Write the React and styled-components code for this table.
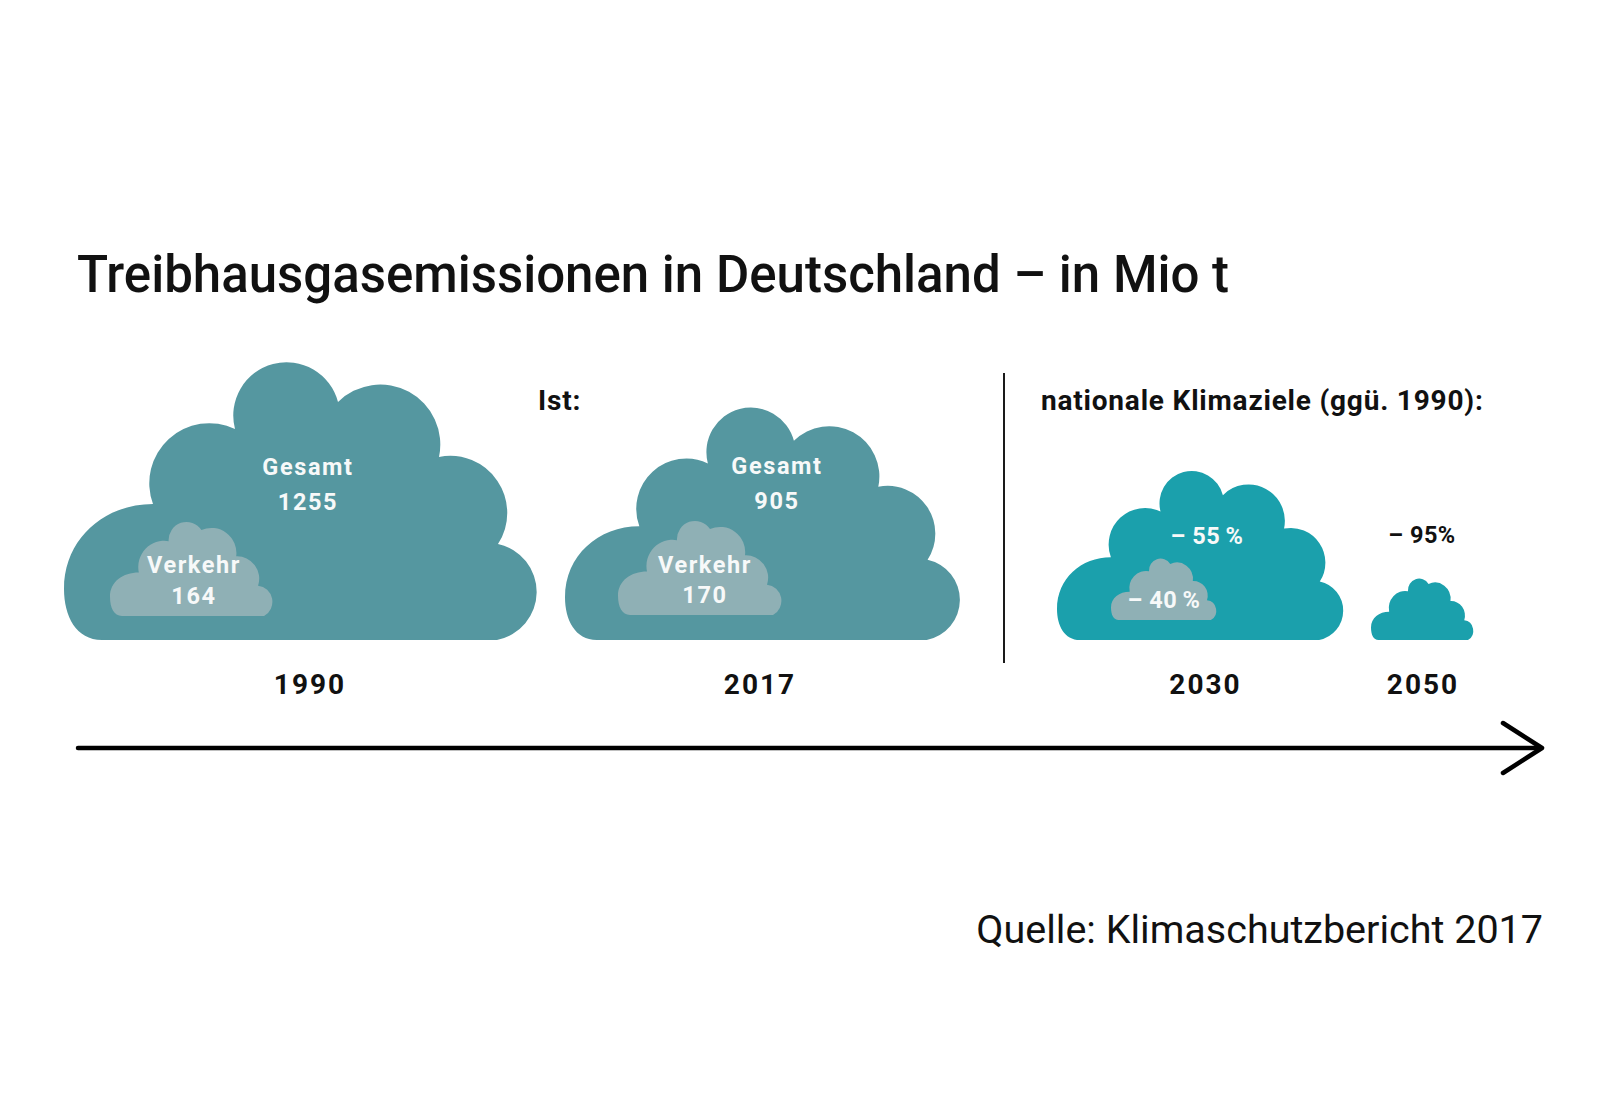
import React from 'react';
import styled, { createGlobalStyle } from 'styled-components';

// Wolkenformen (Pfad im eigenen Koordinatensystem, wird per viewBox skaliert)
const SHAPES = {
  big: {
    w: 474,
    h: 276,
    d: 'M 38 276 C 12 276 0 252 0 225 C 0 175 40 140 89 140 A 60 60 0 0 1 171 65 A 53 53 0 0 1 274 38 A 60 60 0 0 1 375 93 A 57 57 0 0 1 434 180 A 49 49 0 0 1 433 276 Z',
  },
  small: {
    w: 163,
    h: 94,
    d: 'M 12 94 C 4 94 0 86 0 75 C 0 60 13 51 29 51 A 26 26 0 0 1 59 20 A 18 18 0 0 1 92 9 A 25 25 0 0 1 127 35 A 22 22 0 0 1 149 64 A 16 16 0 0 1 155 94 Z',
  },
};

const COLORS = {
  total: '#5597a0',
  traffic: '#8fb0b5',
  goal: '#1ba0ac',
  text: '#111111',
  white: '#f7f9f9',
};

const GlobalStyle = createGlobalStyle`
  html, body {
    margin: 0;
    padding: 0;
    background: #ffffff;
  }
  body {
    font-family: Roboto, "Liberation Sans", sans-serif;
    color: ${COLORS.text};
  }
`;

const Cloud = ({ shape = 'big', width, height, color, children }) => {
  const s = SHAPES[shape];
  return (
    <CloudBox $w={width} $h={height}>
      <CloudSvg
        width={width}
        height={height}
        viewBox={`0 0 ${s.w} ${s.h}`}
        preserveAspectRatio="none"
      >
        <path d={s.d} fill={color} />
      </CloudSvg>
      {children}
    </CloudBox>
  );
};

// Jahres-Spalte: (optionaler Wert oben) – Wolke – Jahreszahl
const YearColumn = ({ year, shift = 0, top, children }) => (
  <Column>
    {top && <OutsideValue>{top}</OutsideValue>}
    {children}
    <YearLabel $shift={shift}>{year}</YearLabel>
  </Column>
);

const App = () => {
  return (
    <>
      <GlobalStyle />
      <Page>
        <Title>Treibhausgasemissionen in Deutschland – in Mio t</Title>

        <Chart>
          <IstGroup>
            <FirstYear>
              <YearColumn year="1990" shift={9}>
                <Cloud width={474} height={276} color={COLORS.total}>
                  <CloudText $x={244} $y={86} $lh={35}>
                    Gesamt
                    <br />
                    1255
                  </CloudText>
                  <InnerCloud $x={46} $y={157}>
                    <Cloud shape="small" width={162} height={95} color={COLORS.traffic}>
                      <CloudText $x={84} $y={29} $lh={31}>
                        Verkehr
                        <br />
                        164
                      </CloudText>
                    </Cloud>
                  </InnerCloud>
                </Cloud>
              </YearColumn>
            </FirstYear>

            <IstHeading>Ist:</IstHeading>

            <SecondYear>
              <YearColumn year="2017" shift={-3}>
                <Cloud width={396} height={231} color={COLORS.total}>
                  <CloudText $x={212} $y={40} $lh={35}>
                    Gesamt
                    <br />
                    905
                  </CloudText>
                  <InnerCloud $x={53} $y={111}>
                    <Cloud shape="small" width={163} height={95} color={COLORS.traffic}>
                      <CloudText $x={87} $y={30} $lh={30}>
                        Verkehr
                        <br />
                        170
                      </CloudText>
                    </Cloud>
                  </InnerCloud>
                </Cloud>
              </YearColumn>
            </SecondYear>
          </IstGroup>

          <Divider />

          <GoalGroup>
            <GoalHeading>nationale Klimaziele (ggü. 1990):</GoalHeading>
            <GoalRow>
              <YearColumn year="2030" shift={5}>
                <Cloud width={287} height={168} color={COLORS.goal}>
                  <CloudText $x={150} $y={49} $lh={31} $ls={0.5}>
                    – 55&#8201;%
                  </CloudText>
                  <InnerCloud $x={54} $y={86}>
                    <Cloud shape="small" width={105} height={62} color={COLORS.traffic}>
                      <CloudText $x={53} $y={27} $lh={31} $ls={0.5}>
                        – 40&#8201;%
                      </CloudText>
                    </Cloud>
                  </InnerCloud>
                </Cloud>
              </YearColumn>

              <YearColumn year="2050" shift={1} top="– 95%">
                <Cloud shape="small" width={102} height={62} color={COLORS.goal} />
              </YearColumn>
            </GoalRow>
          </GoalGroup>
        </Chart>

        <TimeArrow width="1470" height="54" viewBox="0 0 1470 54">
          <line x1="0" y1="27" x2="1462" y2="27" />
          <polyline points="1425,2 1464,27 1425,52" />
        </TimeArrow>

        <Source>Quelle: Klimaschutzbericht 2017</Source>
      </Page>
    </>
  );
};

const Page = styled.div`
  width: 1600px;
  height: 1100px;
  box-sizing: border-box;
  padding-top: 245px;
  display: flex;
  flex-direction: column;
  overflow: hidden;
`;

const Title = styled.h1`
  margin: 0 0 0 77px;
  font-family: Roboto, "Liberation Sans", sans-serif;
  font-size: 51px;
  font-weight: 500;
  line-height: normal;
  color: ${COLORS.text};
  white-space: nowrap;
`;

const Chart = styled.div`
  margin: 60px 0 0 64px;
  display: flex;
  align-items: stretch;
`;

const IstGroup = styled.div`
  display: grid;
  grid-template-columns: 474px auto;
  grid-template-rows: 45px 1fr;
`;

const FirstYear = styled.div`
  grid-column: 1;
  grid-row: 1 / 3;
  align-self: end;
`;

const SecondYear = styled.div`
  grid-column: 2;
  grid-row: 2;
  align-self: end;
  margin-left: 27px;
`;

const Heading = styled.div`
  margin-top: 20px;
  font-size: 28px;
  font-weight: 700;
  line-height: normal;
  letter-spacing: 0.8px;
  color: ${COLORS.text};
  white-space: nowrap;
`;

const IstHeading = styled(Heading)`
  grid-column: 2;
  grid-row: 1;
  margin-left: 0;
`;

const GoalHeading = styled(Heading)`
  margin-left: 36px;
`;

const Divider = styled.div`
  align-self: flex-start;
  width: 2px;
  height: 290px;
  margin: 9px 0 0 42px;
  background: #1a1a1a;
`;

const GoalGroup = styled.div`
  display: flex;
  flex-direction: column;
  justify-content: space-between;
`;

const GoalRow = styled.div`
  display: flex;
  align-items: flex-end;
  gap: 27px;
  margin-left: 52px;
`;

const Column = styled.div`
  display: flex;
  flex-direction: column;
  align-items: center;
`;

const CloudBox = styled.div`
  position: relative;
  width: ${p => p.$w}px;
  height: ${p => p.$h}px;
`;

const CloudSvg = styled.svg`
  display: block;
  overflow: visible;
`;

const InnerCloud = styled.div`
  position: absolute;
  left: ${p => p.$x}px;
  top: ${p => p.$y}px;
`;

const CloudText = styled.div`
  position: absolute;
  left: ${p => p.$x}px;
  top: ${p => p.$y}px;
  transform: translateX(-50%);
  font-size: 23.5px;
  font-weight: 700;
  line-height: ${p => p.$lh}px;
  letter-spacing: ${p => p.$ls ?? 1.6}px;
  color: ${COLORS.white};
  text-align: center;
  white-space: nowrap;
`;

const OutsideValue = styled.div`
  margin-bottom: 27px;
  font-size: 23.5px;
  font-weight: 700;
  line-height: 31px;
  letter-spacing: 0.5px;
  color: ${COLORS.text};
  white-space: nowrap;
`;

const YearLabel = styled.div`
  margin-top: 28px;
  margin-left: ${p => (p.$shift > 0 ? p.$shift * 2 : 0)}px;
  margin-right: ${p => (p.$shift < 0 ? -p.$shift * 2 : 0)}px;
  font-size: 28px;
  font-weight: 700;
  line-height: normal;
  letter-spacing: 2px;
  color: ${COLORS.text};
`;

const TimeArrow = styled.svg`
  display: block;
  margin: 20px 0 0 78px;
  overflow: visible;
  fill: none;
  stroke: #000000;
  stroke-width: 4.5;
  stroke-linecap: round;
  stroke-linejoin: round;
`;

const Source = styled.div`
  align-self: flex-end;
  margin: 131px 57px 0 0;
  font-size: 39.5px;
  font-weight: 400;
  line-height: normal;
  color: ${COLORS.text};
  white-space: nowrap;
`;

export default App;
